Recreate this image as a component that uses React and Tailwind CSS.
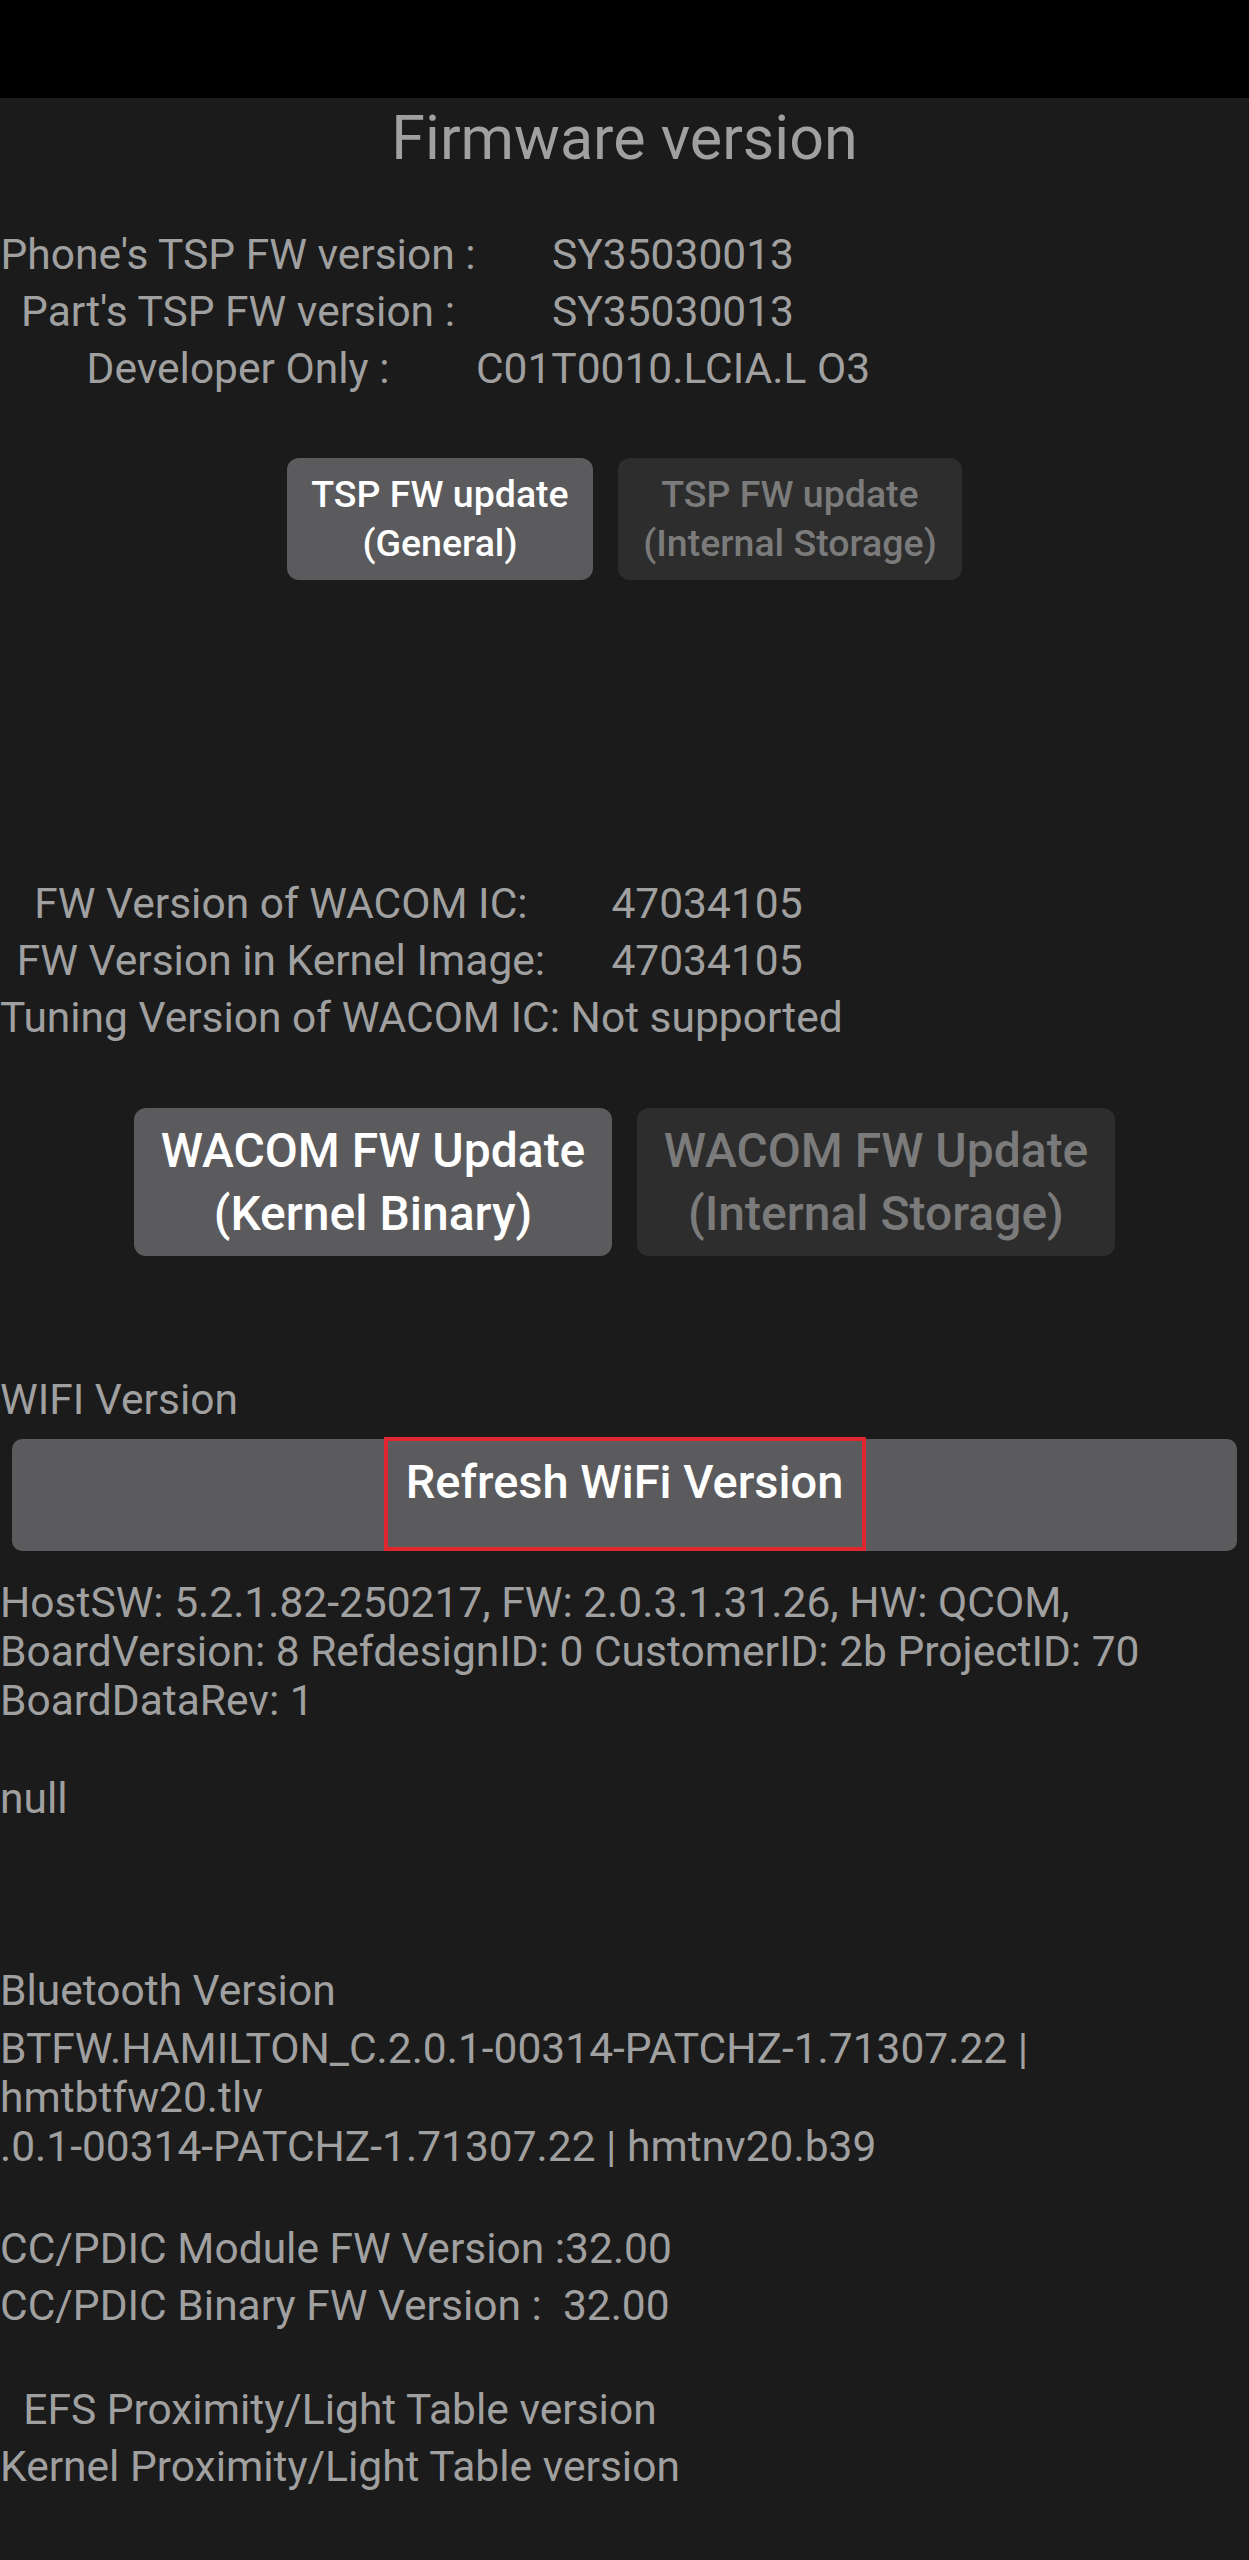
const font = { fontFamily: 'Roboto, "Noto Sans", sans-serif' };

const TspRow = ({ label, value }) => (
  <div className="flex h-[57px] items-center whitespace-nowrap">
    <div className="flex w-[476px] justify-center">{label}</div>
    <div className="flex w-[394px] justify-center">{value}</div>
  </div>
);

const WacomRow = ({ label, value }) => (
  <div className="flex h-[57px] items-center whitespace-nowrap">
    <div className="flex w-[562px] justify-center">{label}</div>
    <div className="flex w-[290px] justify-center">{value}</div>
  </div>
);

const Line = ({ children }) => (
  <div className="h-[57px] leading-[57px] whitespace-pre">{children}</div>
);

export default function App() {
  return (
    <div className="w-[1249px] min-h-[2560px] bg-[#1b1b1b] text-[#a0a0a0] text-[42.5px]" style={font}>
      {/* status bar */}
      <div className="h-[98px] bg-black" />

      <div className="pt-[6px] text-center text-[61px] leading-[68px]">Firmware version</div>

      {/* TSP */}
      <div className="mt-[54px] leading-[57px]">
        <TspRow label="Phone's TSP FW version :" value="SY35030013" />
        <TspRow label="Part's TSP FW version :" value="SY35030013" />
        <TspRow label="Developer Only :" value="C01T0010.LCIA.L O3" />
      </div>

      <div className="mt-[61px] flex justify-center gap-[25px]">
        <button className="h-[122px] w-[306px] rounded-[12px] bg-[#5b5b5d] text-[37.5px] font-medium leading-[49px] text-white">
          TSP FW update<br />(General)
        </button>
        <button className="h-[122px] w-[344px] rounded-[12px] bg-[#2d2d2d] text-[37.5px] font-medium leading-[49px] text-[#7b7b7b]">
          TSP FW update<br />(Internal Storage)
        </button>
      </div>

      {/* WACOM */}
      <div className="mt-[295px] leading-[57px]">
        <WacomRow label="FW Version of WACOM IC:" value="47034105" />
        <WacomRow label="FW Version in Kernel Image:" value="47034105" />
        <Line>Tuning Version of WACOM IC: Not supported</Line>
      </div>

      <div className="mt-[62px] flex justify-center gap-[25px]">
        <button className="h-[148px] w-[478px] rounded-[12px] bg-[#5b5b5d] text-[48px] font-medium leading-[63px] text-white">
          WACOM FW Update<br />(Kernel Binary)
        </button>
        <button className="h-[148px] w-[478px] rounded-[12px] bg-[#2d2d2d] text-[48px] font-medium leading-[63px] text-[#7b7b7b]">
          WACOM FW Update<br />(Internal Storage)
        </button>
      </div>

      {/* WIFI */}
      <div className="mt-[119px] leading-[49px]">WIFI Version</div>
      <div className="px-[12px] pt-[15px]">
        <div className="relative h-[112px] rounded-[10px] bg-[#5b5b5d] pt-[16px] text-center text-[47px] font-medium leading-[53px] text-white">
          Refresh WiFi Version
          <div className="absolute left-[372px] top-[-2px] h-[114px] w-[482px] border-4 border-[#e0262f]" />
        </div>
      </div>
      <div className="mt-[27px] leading-[49px]">
        <div>HostSW: 5.2.1.82-250217, FW: 2.0.3.1.31.26, HW: QCOM,</div>
        <div>BoardVersion: 8 RefdesignID: 0 CustomerID: 2b ProjectID: 70</div>
        <div>BoardDataRev: 1</div>
        <div className="h-[49px]" />
        <div>null</div>
      </div>

      {/* Bluetooth */}
      <div className="mt-[139px] h-[57px] leading-[57px]">Bluetooth Version</div>
      <div className="mt-[5px] leading-[49px]">
        <div>BTFW.HAMILTON_C.2.0.1-00314-PATCHZ-1.71307.22 |</div>
        <div>hmtbtfw20.tlv</div>
        <div>.0.1-00314-PATCHZ-1.71307.22 | hmtnv20.b39</div>
      </div>

      {/* CC/PDIC */}
      <div className="mt-[49px]">
        <Line>CC/PDIC Module FW Version :32.00</Line>
        <Line>CC/PDIC Binary FW Version :  32.00</Line>
      </div>

      {/* Proximity */}
      <div className="mt-[47px] inline-flex flex-col items-center">
        <Line>EFS Proximity/Light Table version</Line>
        <Line>Kernel Proximity/Light Table version</Line>
      </div>
    </div>
  );
}
